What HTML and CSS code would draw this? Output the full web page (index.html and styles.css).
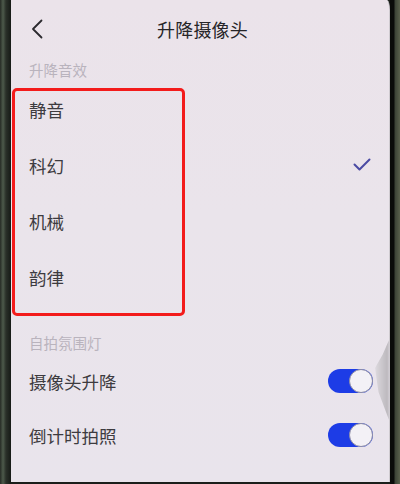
FILE: index.html
```html
<!DOCTYPE html>
<html lang="zh-CN">
<head>
    <meta charset="UTF-8">
    <meta name="viewport" content="width=device-width, initial-scale=1.0">
    <title>升降摄像头</title>
    <link rel="stylesheet" href="styles.css">
</head>
<body>
    <div class="device">
        <div class="bezel-left"></div>

        <div class="screen">
            <header class="top-bar">
                <button class="back-btn" aria-label="返回">
                    <svg width="12" height="20" viewBox="0 0 12 20">
                        <path d="M10.5 1.5 L2 10 L10.5 18.5" fill="none" stroke="#2b2a2e" stroke-width="1.8" stroke-linecap="round" stroke-linejoin="round"/>
                    </svg>
                </button>
                <h1 class="page-title">升降摄像头</h1>
            </header>

            <div class="section-label">升降音效</div>
            <ul class="option-list">
                <li class="option">静音</li>
                <li class="option selected">
                    科幻
                    <svg class="check" width="18" height="14" viewBox="0 0 18 14">
                        <path d="M1.5 6.5 L6.5 11.5 L16.5 1.5" fill="none" stroke="#4a4aa3" stroke-width="2" stroke-linecap="round" stroke-linejoin="round"/>
                    </svg>
                </li>
                <li class="option">机械</li>
                <li class="option">韵律</li>
            </ul>

            <div class="section-label second">自拍氛围灯</div>
            <ul class="switch-list">
                <li class="switch-row">
                    摄像头升降
                    <span class="toggle on"><span class="knob"></span></span>
                </li>
                <li class="switch-row">
                    倒计时拍照
                    <span class="toggle on"><span class="knob"></span></span>
                </li>
            </ul>

            <!-- highlight frame drawn over the sound list -->
            <div class="highlight"></div>
            <!-- light catching the curved glass edge -->
            <div class="edge-glare"></div>
        </div>

        <div class="bezel-right"></div>
    </div>
</body>
</html>
```

FILE: styles.css
```css
body {
    margin: 0;
    padding: 0;
    background-color: #1b1f1b;
    font-family: 'Noto Sans CJK SC', 'Noto Sans', sans-serif;
    overflow: hidden;
}

.device {
    display: flex;
    width: 400px;
    height: 484px;
}

.bezel-left {
    width: 11px;
    background: linear-gradient(to right, #262b25 0, #4d5a4b 3px, #2a3029 6px, #161a16 11px);
}

.bezel-right {
    flex: 1;
    background: linear-gradient(to right, #0a0b0a 0, #0a0b0a 4px, #3b4236 5px, #59604c 10px);
}

.screen {
    position: relative;
    width: 379px;
    height: 482px;
    background: linear-gradient(to bottom, #ebe3ea 0%, #eae4eb 45%, #e9e4ec 100%);
    border-top-right-radius: 3px 10px;
    border-right: 1px solid #cfcbd0;
    box-sizing: border-box;
    color: #3d3b3f;
    overflow: hidden;
}

/* Header */
.top-bar {
    position: relative;
    height: 58px;
    display: flex;
    align-items: center;
    justify-content: center;
}

.back-btn {
    position: absolute;
    left: 20px;
    top: 19px;
    background: none;
    border: none;
    padding: 0;
    display: flex;
}

.page-title {
    margin: 0 0 0 5px;
    font-size: 18px;
    font-weight: 400;
    color: #262528;
    letter-spacing: 0.2px;
}

/* Sections */
.section-label {
    padding-left: 18px;
    height: 23px;
    line-height: 23px;
    font-size: 14.5px;
    color: #b9b3bd;
}

.section-label.second {
    margin-top: 27px;
    height: 22px;
    line-height: 22px;
}

.option-list,
.switch-list {
    list-style: none;
    margin: 0;
    padding: 0;
}

.option {
    height: 56px;
    display: flex;
    align-items: center;
    justify-content: space-between;
    padding: 0 18px 0 18px;
    font-size: 17.5px;
}

.switch-row {
    height: 54px;
    display: flex;
    align-items: center;
    justify-content: space-between;
    padding: 0 16px 0 18px;
    font-size: 17.5px;
}

.toggle {
    position: relative;
    width: 45px;
    height: 24px;
    border-radius: 12px;
    background-color: #1d3ce6;
}

.toggle .knob {
    position: absolute;
    right: 0;
    top: 0;
    width: 24px;
    height: 24px;
    border-radius: 50%;
    background-color: #f3f1f6;
    border: 1.5px solid #8d8ca3;
    box-sizing: border-box;
}

/* Overlays */
.highlight {
    position: absolute;
    left: 1px;
    top: 88px;
    width: 173px;
    height: 228px;
    border: 3.5px solid #f31b1b;
    border-radius: 5px;
    box-sizing: border-box;
}

.edge-glare {
    position: absolute;
    right: 0;
    top: 340px;
    width: 14px;
    height: 80px;
    clip-path: polygon(100% 0, 55% 18%, 0 35%, 25% 65%, 100% 100%);
    background: linear-gradient(to right, #ddd9de, #b8b5ba);
    filter: blur(1px);
}
```
